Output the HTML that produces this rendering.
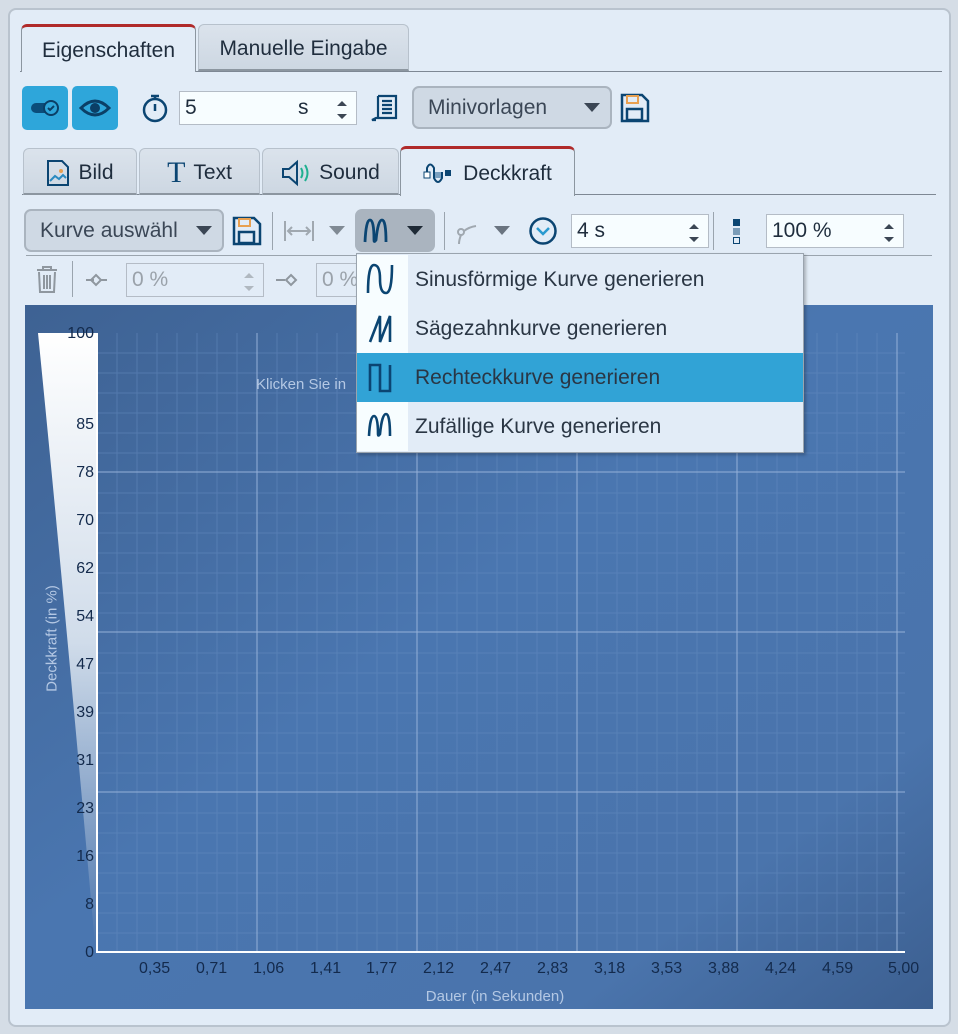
<!DOCTYPE html>
<html><head><meta charset="utf-8"><style>
*{box-sizing:border-box;margin:0;padding:0}
body{width:958px;height:1034px;background:#d5dde6;font-family:"Liberation Sans",sans-serif;position:relative;overflow:hidden;color:#1f2d3d}
.a{position:absolute}
.frame{left:8px;top:8px;width:943px;height:1019px;background:#e2ecf7;border:2px solid #b9c3ce;border-radius:8px}
.tab{position:absolute;background:linear-gradient(#dbe3ec,#cdd7e2);border:1px solid #b7c1cc;border-bottom:none;border-radius:6px 6px 0 0;font-size:21px;color:#1f2d3d;display:flex;align-items:center;justify-content:center;gap:8px;padding-top:3px}
.tab.act{background:#e2ecf7;border:1px solid #8c96a0;border-top:3px solid #b02a2a;border-bottom:none}
.inp{position:absolute;background:#f7fdff;border:1px solid #b4bcc6;font-size:21px;padding-left:5px;display:flex;align-items:center}
.btn{position:absolute;background:#cfd9e4;border:2px solid #aab4bf;border-radius:7px;font-size:21px;color:#3b4756;display:flex;align-items:center;padding-left:14px}
.dd{position:absolute;width:0;height:0;border-left:8px solid transparent;border-right:8px solid transparent;border-top:9px solid #3b4654}
.spin{position:absolute;right:8px;top:6px;width:12px;height:24px}
.lab{position:absolute;color:#132a4c;font-size:16px}
.menu div{height:49px;display:flex;align-items:center;font-size:21px;color:#2a3644}
</style></head><body>
<div class="a frame"></div>
<div class="a" style="left:20px;top:71px;width:922px;height:1px;background:#7e8894"></div>
<div class="tab act" style="left:21px;top:24px;width:175px;height:48px">Eigenschaften</div>
<div class="tab" style="left:198px;top:24px;width:211px;height:47px;border-bottom:2px solid #8c96a0">Manuelle Eingabe</div>

<div class="a" style="left:22px;top:86px;width:46px;height:44px;background:#2ea6da;border-radius:5px"><svg width="46" height="44"><rect x="9" y="17" width="22" height="10" rx="5" fill="#0b4d7a"/><circle cx="29" cy="22" r="7" fill="#2ea6da" stroke="#0b3f66" stroke-width="2"/><path d="M26 22l2 2 4-4" stroke="#0b3f66" stroke-width="2" fill="none"/></svg></div>
<div class="a" style="left:72px;top:86px;width:46px;height:44px;background:#2ea6da;border-radius:5px"><svg width="46" height="44"><path d="M9 22q14-14 28 0q-14 14-28 0z" fill="none" stroke="#0b3f66" stroke-width="3"/><circle cx="23" cy="22" r="5" fill="#0b3f66"/></svg></div>
<svg class="a" style="left:140px;top:92px" width="30" height="32"><circle cx="15" cy="18" r="11" fill="none" stroke="#0b4572" stroke-width="2.5"/><path d="M11 4h8M15 4v4M15 12v7" stroke="#0b4572" stroke-width="2.5"/></svg>
<div class="inp" style="left:179px;top:91px;width:178px;height:34px">5<span style="position:absolute;left:118px">s</span><svg class="spin" viewBox="0 0 12 24"><path d="M1 8l5-5 5 5zM1 16l5 5 5-5z" fill="#3b4654"/></svg></div>
<svg class="a" style="left:370px;top:92px" width="32" height="32"><path d="M8 4h18v22H6l-4 2h4M8 4v22M12 9h10M12 13h10M12 17h10M12 21h10" fill="none" stroke="#0b4572" stroke-width="2.2"/></svg>
<div class="btn" style="left:412px;top:86px;width:200px;height:43px">Minivorlagen<div class="dd" style="left:170px;top:15px"></div></div>
<svg class="a" style="left:620px;top:93px" width="30" height="30"><path d="M2 2h20l6 6v20H2z" fill="none" stroke="#0b4572" stroke-width="2.5"/><rect x="7" y="3" width="11" height="7" fill="none" stroke="#e8a050" stroke-width="2"/><rect x="7" y="16" width="15" height="11" fill="none" stroke="#0b4572" stroke-width="2.5"/></svg>

<div class="a" style="left:22px;top:194px;width:914px;height:1px;background:#7e8894"></div>
<div class="tab" style="left:23px;top:148px;width:114px;height:47px;border-bottom:2px solid #8c96a0"><svg width="24" height="28"><path d="M2 2h14l6 6v18H2z" fill="none" stroke="#0b4572" stroke-width="2"/><path d="M4 22l5-5 4 3 4-4 3 3" fill="none" stroke="#2a8ac0" stroke-width="2"/><circle cx="15" cy="12" r="2" fill="#e8a050"/></svg>Bild</div>
<div class="tab" style="left:139px;top:148px;width:121px;height:47px;border-bottom:2px solid #8c96a0"><span style="font-family:'Liberation Serif',serif;font-size:30px;color:#0b4572">T</span>Text</div>
<div class="tab" style="left:262px;top:148px;width:137px;height:47px;border-bottom:2px solid #8c96a0"><svg width="30" height="28"><path d="M2 10h6l8-7v22l-8-7H2z" fill="none" stroke="#0b4572" stroke-width="2"/><path d="M20 9q3 5 0 10M24 6q5 8 0 16" fill="none" stroke="#1fb090" stroke-width="2"/></svg>Sound</div>
<div class="tab act" style="left:400px;top:146px;width:175px;height:50px"><svg width="32" height="28"><path d="M4 14V8q3-7 7 0v10q4 8 8 0v-6" fill="none" stroke="#0b4572" stroke-width="2"/><rect x="1" y="12" width="6" height="6" fill="#fff" stroke="#0b4572"/><rect x="12" y="12" width="6" height="6" fill="#7aa0c0"/><rect x="22" y="10" width="6" height="6" fill="#0b4572"/></svg>Deckkraft</div>

<div class="btn" style="left:24px;top:209px;width:200px;height:43px">Kurve auswähl<div class="dd" style="left:170px;top:15px"></div></div>
<svg class="a" style="left:232px;top:216px" width="30" height="30"><path d="M2 2h20l6 6v20H2z" fill="none" stroke="#0b4572" stroke-width="2.5"/><rect x="7" y="3" width="11" height="7" fill="none" stroke="#e8a050" stroke-width="2"/><rect x="7" y="16" width="15" height="11" fill="none" stroke="#0b4572" stroke-width="2.5"/></svg>
<div class="a" style="left:272px;top:212px;width:1px;height:38px;background:#9aa4ae"></div>
<svg class="a" style="left:283px;top:219px" width="32" height="24"><path d="M2 2v20M30 2v20M5 12h22M9 8l-4 4 4 4M23 8l4 4-4 4" fill="none" stroke="#a0a8b0" stroke-width="2"/></svg>
<div class="dd" style="left:329px;top:226px;border-top-color:#808a94"></div>
<div class="a" style="left:355px;top:209px;width:80px;height:43px;background:#aab4bf;border-radius:7px"><svg width="80" height="43"><path d="M10 33q1-22 5-22t4 20q0 3 2 0q2-20 6-20t4 22" fill="none" stroke="#0b4572" stroke-width="2.8"/><path d="M52 17h16l-8 9z" fill="#1f2a36"/></svg></div>
<div class="a" style="left:444px;top:212px;width:1px;height:38px;background:#9aa4ae"></div>
<svg class="a" style="left:455px;top:220px" width="26" height="26"><circle cx="6" cy="12" r="3" fill="none" stroke="#a0a8b0" stroke-width="2"/><path d="M6 15q-2 5-2 9M9 11q5-4 12-5" fill="none" stroke="#a0a8b0" stroke-width="2"/></svg>
<div class="dd" style="left:494px;top:226px;border-top-color:#6a7480"></div>
<svg class="a" style="left:528px;top:216px" width="30" height="30"><circle cx="15" cy="15" r="12.5" fill="none" stroke="#0b4572" stroke-width="2.5"/><path d="M9 12l6 6 6-6" fill="none" stroke="#2a9ad0" stroke-width="2.5"/></svg>
<div class="inp" style="left:571px;top:214px;width:138px;height:34px">4 s<svg class="spin" viewBox="0 0 12 24"><path d="M1 8l5-5 5 5zM1 16l5 5 5-5z" fill="#3b4654"/></svg></div>
<div class="a" style="left:713px;top:212px;width:1px;height:38px;background:#9aa4ae"></div>
<svg class="a" style="left:732px;top:218px" width="10" height="28"><rect x="1" y="1" width="7" height="7" fill="#0b4572"/><rect x="1" y="10" width="7" height="7" fill="#7a9cb8"/><rect x="1.5" y="19.5" width="6" height="6" fill="none" stroke="#0b4572"/></svg>
<div class="inp" style="left:766px;top:214px;width:138px;height:34px">100 %<svg class="spin" viewBox="0 0 12 24"><path d="M1 8l5-5 5 5zM1 16l5 5 5-5z" fill="#3b4654"/></svg></div>
<div class="a" style="left:26px;top:255px;width:906px;height:1px;background:#9aa4ae"></div>

<svg class="a" style="left:34px;top:264px" width="26" height="30"><path d="M3 6h20M9 6V3h8v3M5 8l1 20h14l1-20M10 11v14M13 11v14M16 11v14" fill="none" stroke="#8f979f" stroke-width="2"/></svg>
<div class="a" style="left:72px;top:261px;width:1px;height:36px;background:#9aa4ae"></div>
<svg class="a" style="left:86px;top:270px" width="22" height="20"><path d="M0 10h8" stroke="#8f979f" stroke-width="2"/><path d="M10 5l5 5-5 5-5-5z" fill="none" stroke="#8f979f" stroke-width="2"/><path d="M15 10h6" stroke="#8f979f" stroke-width="2"/></svg>
<div class="inp" style="left:126px;top:263px;width:138px;height:34px;background:#e2ecf7;color:#9aa2aa">0 %<svg class="spin" viewBox="0 0 12 24"><path d="M1 8l5-5 5 5zM1 16l5 5 5-5z" fill="#b0b8c0"/></svg></div>
<svg class="a" style="left:276px;top:270px" width="24" height="20"><path d="M0 10h9" stroke="#8f979f" stroke-width="2"/><path d="M15 5l5 5-5 5-5-5z" fill="none" stroke="#8f979f" stroke-width="2"/></svg>
<div class="inp" style="left:316px;top:263px;width:60px;height:34px;background:#e2ecf7;color:#9aa2aa">0 %</div>

<svg class="a" style="left:25px;top:305px" width="908" height="704">
<defs><linearGradient id="bg" x1="0" y1="0" x2="1" y2="1"><stop offset="0" stop-color="#3e6293"/><stop offset="0.45" stop-color="#4a76b0"/><stop offset="0.8" stop-color="#4a74ac"/><stop offset="1" stop-color="#3c5f90"/></linearGradient>
<linearGradient id="wg" x1="0" y1="0" x2="0" y2="1"><stop offset="0" stop-color="#ffffff"/><stop offset="0.5" stop-color="#d0dcea"/><stop offset="1" stop-color="#4a74ac"/></linearGradient></defs>
<rect width="908" height="704" fill="url(#bg)"/>
<g stroke="#6a90c4" stroke-width="1" opacity="0.45">
<path d="M92 28v619M112 28v619M132 28v619M152 28v619M172 28v619M192 28v619M212 28v619M252 28v619M272 28v619M292 28v619M312 28v619M332 28v619M352 28v619M372 28v619M412 28v619M432 28v619M452 28v619M472 28v619M492 28v619M512 28v619M532 28v619M572 28v619M592 28v619M612 28v619M632 28v619M652 28v619M672 28v619M692 28v619M732 28v619M752 28v619M772 28v619M792 28v619M812 28v619M832 28v619M852 28v619"/>
<path d="M72 48h808M72 68h808M72 88h808M72 108h808M72 128h808M72 148h808M72 188h808M72 208h808M72 228h808M72 248h808M72 268h808M72 288h808M72 308h808M72 348h808M72 368h808M72 388h808M72 408h808M72 428h808M72 448h808M72 468h808M72 508h808M72 528h808M72 548h808M72 568h808M72 588h808M72 608h808M72 628h808"/>
</g>
<g stroke="#94b0d8" stroke-width="1"><path d="M232 28v619M392 28v619M552 28v619M712 28v619M872 28v619M72 167h808M72 327h808M72 487h808"/></g>
<path d="M13 28H72V647L70 640Q40 300 13 28z" fill="url(#wg)"/>
<path d="M72 28V647H880" fill="none" stroke="#fff" stroke-width="2"/>
</svg>
<div class="a" style="left:256px;top:376px;color:#b4c8e4;font-size:15px">Klicken Sie in</div>
<div class="lab" style="left:56px;top:325px;width:38px;text-align:right">100</div>
<div class="lab" style="left:56px;top:416px;width:38px;text-align:right">85</div>
<div class="lab" style="left:56px;top:464px;width:38px;text-align:right">78</div>
<div class="lab" style="left:56px;top:512px;width:38px;text-align:right">70</div>
<div class="lab" style="left:56px;top:560px;width:38px;text-align:right">62</div>
<div class="lab" style="left:56px;top:608px;width:38px;text-align:right">54</div>
<div class="lab" style="left:56px;top:656px;width:38px;text-align:right">47</div>
<div class="lab" style="left:56px;top:704px;width:38px;text-align:right">39</div>
<div class="lab" style="left:56px;top:752px;width:38px;text-align:right">31</div>
<div class="lab" style="left:56px;top:800px;width:38px;text-align:right">23</div>
<div class="lab" style="left:56px;top:848px;width:38px;text-align:right">16</div>
<div class="lab" style="left:56px;top:896px;width:38px;text-align:right">8</div>
<div class="lab" style="left:56px;top:944px;width:38px;text-align:right">0</div>
<div class="a" style="left:-18px;top:630px;width:140px;text-align:center;transform:rotate(-90deg);color:#b4c8e4;font-size:15px">Deckkraft (in %)</div>
<div class="lab" style="left:0;top:960px;width:958px;height:20px">
<span class="a" style="left:139px">0,35</span><span class="a" style="left:196px">0,71</span><span class="a" style="left:253px">1,06</span><span class="a" style="left:310px">1,41</span><span class="a" style="left:366px">1,77</span><span class="a" style="left:423px">2,12</span><span class="a" style="left:480px">2,47</span><span class="a" style="left:537px">2,83</span><span class="a" style="left:594px">3,18</span><span class="a" style="left:651px">3,53</span><span class="a" style="left:708px">3,88</span><span class="a" style="left:765px">4,24</span><span class="a" style="left:822px">4,59</span><span class="a" style="left:888px">5,00</span></div>
<div class="a" style="left:0;top:988px;width:990px;text-align:center;color:#b4c8e4;font-size:15px">Dauer (in Sekunden)</div>

<div class="a menu" style="left:356px;top:253px;width:448px;height:200px;background:#e2ecf7;border:1px solid #9aa4ae;box-shadow:2px 2px 3px rgba(0,0,0,0.25);padding-top:1px">
<div style="background:linear-gradient(90deg,#f7fdff 51px,#e2ecf7 51px)"><svg width="58" height="49"><path d="M13 38q0-28 6-28t6 14 6 14 6-28" fill="none" stroke="#0b4572" stroke-width="2.6" transform="translate(-2 0)"/></svg>Sinusförmige Kurve generieren</div>
<div style="background:linear-gradient(90deg,#f7fdff 51px,#e2ecf7 51px)"><svg width="58" height="49"><path d="M13 38l10-26v26l10-26v26" fill="none" stroke="#0b4572" stroke-width="2.6"/></svg>Sägezahnkurve generieren</div>
<div style="background:#31a3d6"><svg width="58" height="49"><path d="M13 38V12h10v26h10V12" fill="none" stroke="#0b4572" stroke-width="2.6"/></svg>Rechteckkurve generieren</div>
<div style="background:linear-gradient(90deg,#f7fdff 51px,#e2ecf7 51px)"><svg width="58" height="49"><path d="M12 34q1-20 5-20t4 18q0 3 2 0q2-20 6-20t4 22" fill="none" stroke="#0b4572" stroke-width="2.6"/></svg>Zufällige Kurve generieren</div>
</div>
</body></html>
